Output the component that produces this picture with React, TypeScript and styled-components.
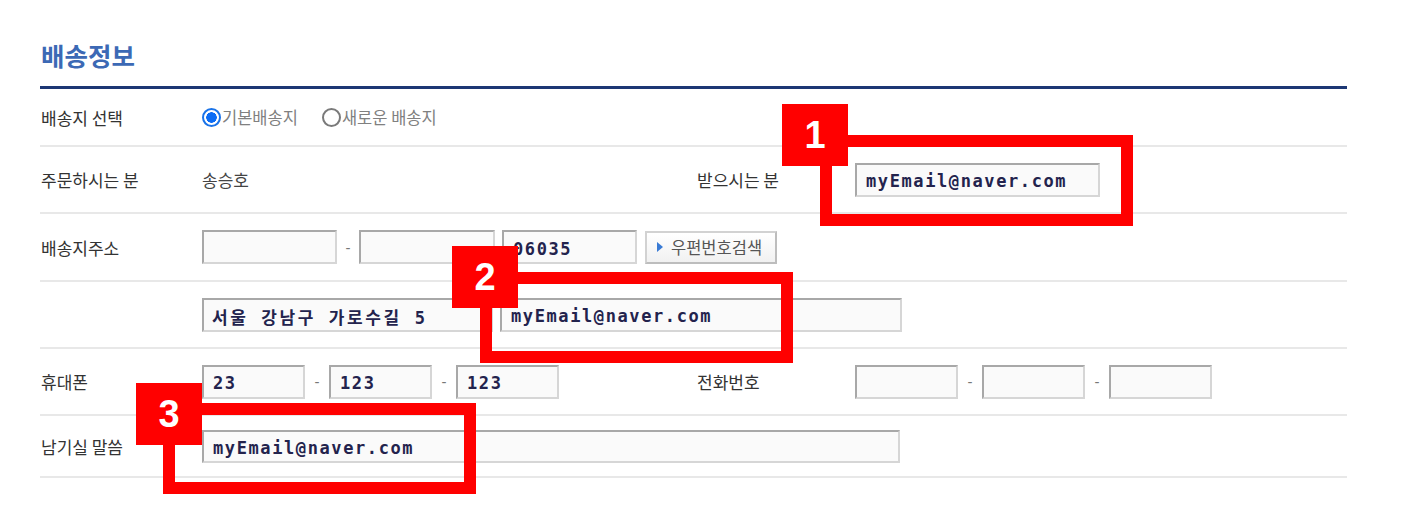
import styled, { createGlobalStyle } from "styled-components";

const GlobalStyle = createGlobalStyle`
    body {
        margin: 0;
        background: #ffffff;
        font-family: "Noto Sans CJK KR", "Noto Sans", sans-serif;
    }
`;

interface Callout {
    num: number;
    boxX: number;
    boxY: number;
    badgeX: number;
    badgeY: number;
}

const callouts: Callout[] = [
    { num: 1, boxX: 820, boxY: 135, badgeX: 782, badgeY: 104 },
    { num: 2, boxX: 480, boxY: 272, badgeX: 452, badgeY: 246 },
    { num: 3, boxX: 163, boxY: 403, badgeX: 136, badgeY: 383 },
];

const App = () => {
    return (
        <Page>
            <GlobalStyle />
            <Section>
                <Title>배송정보</Title>
                <Table>
                    <Row $h={56}>
                        <Th>배송지 선택</Th>
                        <Td>
                            <RadioLabel>
                                <Radio $checked />
                                기본배송지
                            </RadioLabel>
                            <RadioLabel>
                                <Radio />
                                새로운 배송지
                            </RadioLabel>
                        </Td>
                    </Row>

                    <Row $h={65}>
                        <Th>주문하시는 분</Th>
                        <Td $w={495}>
                            <Plain>송승호</Plain>
                        </Td>
                        <Th $w={158}>받으시는 분</Th>
                        <Td>
                            <Field $w={245} readOnly value="myEmail@naver.com" />
                        </Td>
                    </Row>

                    <Row $h={66}>
                        <Th>배송지주소</Th>
                        <Td>
                            <Field $w={135} readOnly value="" />
                            <Dash $w={22}>-</Dash>
                            <Field $w={136} readOnly value="" />
                            <Field $w={135} $ml={7} readOnly value="06035" />
                            <ZipButton type="button">
                                <Arrow />
                                우편번호검색
                            </ZipButton>
                        </Td>
                    </Row>

                    <Row $h={65}>
                        <Th />
                        <Td>
                            <Field $w={291} $wide readOnly value="서울 강남구 가로수길 5" />
                            <Field $w={402} $ml={7} readOnly value="myEmail@naver.com" />
                        </Td>
                    </Row>

                    <Row $h={65}>
                        <Th>휴대폰</Th>
                        <Td $w={495}>
                            <Field $w={103} readOnly value="23" />
                            <Dash $w={24}>-</Dash>
                            <Field $w={103} readOnly value="123" />
                            <Dash $w={24}>-</Dash>
                            <Field $w={103} readOnly value="123" />
                        </Td>
                        <Th $w={158}>전화번호</Th>
                        <Td>
                            <Field $w={103} readOnly value="" />
                            <Dash $w={24}>-</Dash>
                            <Field $w={103} readOnly value="" />
                            <Dash $w={24}>-</Dash>
                            <Field $w={103} readOnly value="" />
                        </Td>
                    </Row>

                    <Row $h={60}>
                        <Th>남기실 말씀</Th>
                        <Td>
                            <Field $w={698} $h={33} readOnly value="myEmail@naver.com" />
                        </Td>
                    </Row>
                </Table>
            </Section>

            {callouts.map((c) => (
                <div key={c.num}>
                    <MarkBox style={{ left: c.boxX, top: c.boxY }} />
                    <Badge style={{ left: c.badgeX, top: c.badgeY }}>{c.num}</Badge>
                </div>
            ))}
        </Page>
    );
};

const Page = styled.div`
    position: relative;
    width: 1413px;
    height: 515px;
    overflow: hidden;
`;

const Section = styled.div`
    width: 1307px;
    padding: 42px 0 0 40px;
`;

const Title = styled.h2`
    margin: 0 0 19px 1px;
    font-size: 25.5px;
    line-height: 25px;
    font-weight: 700;
    color: #3c69b5;
`;

const Table = styled.div`
    border-top: 3px solid #1c3774;
`;

const Row = styled.div<{ $h: number }>`
    display: flex;
    align-items: center;
    height: ${(p) => p.$h}px;
    border-bottom: 2px solid #e8e8e8;
`;

const Th = styled.div<{ $w?: number }>`
    flex: none;
    width: ${(p) => p.$w ?? 162}px;
    font-size: 17px;
    color: #333333;
    padding-left: ${(p) => (p.$w ? 0 : 1)}px;
    box-sizing: border-box;
`;

const Td = styled.div<{ $w?: number }>`
    display: flex;
    align-items: center;
    flex: ${(p) => (p.$w ? "none" : "1")};
    width: ${(p) => (p.$w ? `${p.$w}px` : "auto")};
`;

const Plain = styled.span`
    font-size: 17px;
    color: #444444;
`;

const RadioLabel = styled.label`
    display: flex;
    align-items: center;
    font-size: 16.5px;
    color: #808080;
    margin-right: 24px;
`;

const Radio = styled.span<{ $checked?: boolean }>`
    width: 19px;
    height: 19px;
    box-sizing: border-box;
    border-radius: 50%;
    border: 2px solid ${(p) => (p.$checked ? "#1a73e8" : "#7a7a7a")};
    background: ${(p) => (p.$checked ? "radial-gradient(circle, #0b6cf5 0 5px, #ffffff 5.5px)" : "#ffffff")};
    margin-right: 1px;
`;

const Field = styled.input<{ $w: number; $h?: number; $ml?: number; $wide?: boolean }>`
    width: ${(p) => p.$w}px;
    height: ${(p) => p.$h ?? 34}px;
    margin-left: ${(p) => p.$ml ?? 0}px;
    box-sizing: border-box;
    padding: 3px 0 0 ${(p) => (p.$wide ? 8 : 9)}px;
    border-style: solid;
    border-width: 2px;
    border-color: #a8a8a8 #d6d6d6 #d6d6d6 #a8a8a8;
    background: #fafafa;
    font-family: "DejaVu Sans Mono", "Noto Sans CJK KR", monospace;
    font-weight: 700;
    font-size: 17px;
    letter-spacing: ${(p) => (p.$wide ? 2.6 : 1.6)}px;
    color: #23234d;
    outline: none;
`;

const Dash = styled.span<{ $w: number }>`
    width: ${(p) => p.$w}px;
    text-align: center;
    font-family: "Liberation Sans", sans-serif;
    font-size: 15px;
    color: #777777;
`;

const ZipButton = styled.button`
    display: flex;
    align-items: center;
    margin-left: 8px;
    width: 132px;
    height: 33px;
    padding: 0 0 0 10px;
    box-sizing: border-box;
    border: 2px solid #d2d2d2;
    border-right-color: #bdbdbd;
    border-bottom-color: #bdbdbd;
    background: linear-gradient(#ffffff, #f1f1f1);
    font-family: "Noto Sans CJK KR", sans-serif;
    font-size: 16.5px;
    color: #555555;
`;

const Arrow = styled.span`
    width: 0;
    height: 0;
    border-top: 5px solid transparent;
    border-bottom: 5px solid transparent;
    border-left: 6px solid #3a7bd5;
    margin-right: 8px;
`;

const MarkBox = styled.div`
    position: absolute;
    width: 313px;
    height: 91px;
    box-sizing: border-box;
    border: 12px solid #ff0000;
`;

const Badge = styled.div`
    position: absolute;
    width: 66px;
    height: 62px;
    display: flex;
    align-items: center;
    justify-content: center;
    background: #ff0000;
    color: #ffffff;
    font-family: "Liberation Sans", sans-serif;
    font-weight: 700;
    font-size: 38px;
`;

export default App;
